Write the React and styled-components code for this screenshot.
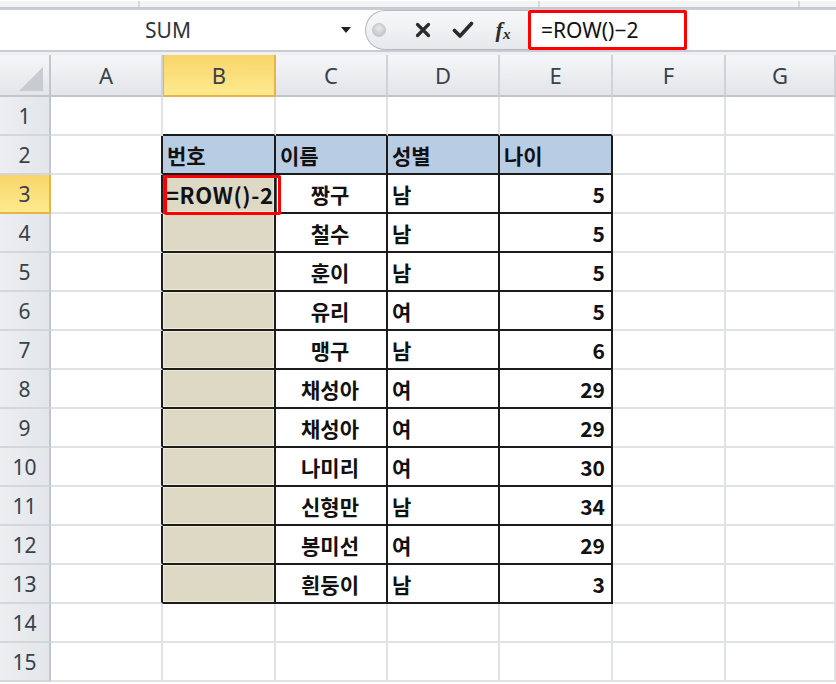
import React from "react";
import styled, { createGlobalStyle } from "styled-components";

const GlobalStyle = createGlobalStyle`
  html, body {
    margin: 0;
    padding: 0;
    background: #ffffff;
    overflow: hidden;
  }
  body {
    font-family: "Noto Sans", "Noto Sans CJK KR", sans-serif;
  }
`;

const COLS = ["A", "B", "C", "D", "E", "F", "G"];
const ROW_COUNT = 15;

const people = [
  { name: "짱구", gender: "남", age: 5 },
  { name: "철수", gender: "남", age: 5 },
  { name: "훈이", gender: "남", age: 5 },
  { name: "유리", gender: "여", age: 5 },
  { name: "맹구", gender: "남", age: 6 },
  { name: "채성아", gender: "여", age: 29 },
  { name: "채성아", gender: "여", age: 29 },
  { name: "나미리", gender: "여", age: 30 },
  { name: "신형만", gender: "남", age: 34 },
  { name: "봉미선", gender: "여", age: 29 },
  { name: "흰둥이", gender: "남", age: 3 },
];

// table lives in B2:E13 (col index 1..4, row 2..13)
const inTable = (c, r) => c >= 1 && c <= 4 && r >= 2 && r <= 13;

function cellContent(c, r) {
  if (r === 2) {
    return { text: ["번호", "이름", "성별", "나이"][c - 1], fill: "#b8cce4", align: "left" };
  }
  const p = people[r - 3];
  if (c === 1) return { text: "", fill: "#ddd9c4", align: "left", tan: true };
  if (c === 2) return { text: p.name, align: "center" };
  if (c === 3) return { text: p.gender, align: "left" };
  return { text: p.age, align: "right" };
}

export default function App() {
  const cells = [];
  for (let r = 1; r <= ROW_COUNT; r++) {
    cells.push(
      <RowHead key={"h" + r} $active={r === 3}>
        {r}
      </RowHead>
    );
    for (let c = 0; c < COLS.length; c++) {
      const table = inTable(c, r);
      const rightDark = table || inTable(c + 1, r);
      const bottomDark = table || inTable(c, r + 1);
      const content = table ? cellContent(c, r) : {};
      cells.push(
        <Cell
          key={r + "-" + c}
          $fill={content.fill}
          $align={content.align}
          $rightDark={rightDark}
          $bottomDark={bottomDark}
          $tan={content.tan}
        >
          {c === 1 && r === 3 ? (
            <>
              <EditText>=ROW()-2</EditText>
              <EditFrame />
              <RedMark />
            </>
          ) : (
            content.text
          )}
        </Cell>
      );
    }
  }

  return (
    <>
      <GlobalStyle />
      <Page>
        <TopStrip>
          <StripPart $w={140} />
          <StripPart $w={400} />
          <StripPart $w={260} />
        </TopStrip>
        <FormulaBar>
          <NameBox>
            <NameText>SUM</NameText>
            <ArrowArea>
              <DropArrow />
            </ArrowArea>
          </NameBox>
          <Pill>
            <DotArea>
              <Dot />
            </DotArea>
            <IconBtn $first>
              <svg width="18" height="18" viewBox="0 0 18 18">
                <path
                  d="M3.5 3.5 L14.5 14.5 M14.5 3.5 L3.5 14.5"
                  stroke="#2b2b2b"
                  strokeWidth="3.2"
                  strokeLinecap="round"
                  fill="none"
                />
              </svg>
            </IconBtn>
            <IconBtn>
              <svg width="22" height="20" viewBox="0 0 22 20">
                <path
                  d="M2.5 10.5 L8 16 L19.5 3.5"
                  stroke="#2b2b2b"
                  strokeWidth="3.6"
                  strokeLinecap="round"
                  strokeLinejoin="round"
                  fill="none"
                />
              </svg>
            </IconBtn>
            <IconBtn>
              <Fx>
                f<sub>x</sub>
              </Fx>
            </IconBtn>
          </Pill>
          <FormulaInput>
            <FormulaMark>=ROW()−2</FormulaMark>
          </FormulaInput>
        </FormulaBar>
        <Gap />
        <Sheet>
          <Corner>
            <CornerTri />
          </Corner>
          {COLS.map((col) => (
            <ColHead key={col} $active={col === "B"}>
              {col}
            </ColHead>
          ))}
          {cells}
        </Sheet>
      </Page>
    </>
  );
}

const Page = styled.div`
  width: 836px;
  height: 684px;
  overflow: hidden;
  background: #ffffff;
`;

const TopStrip = styled.div`
  display: flex;
  height: 6px;
  background: #f3f4f6;
  border-top: 1px solid #ffffff;
  border-bottom: 1px solid #c6cad0;
`;

const StripPart = styled.div`
  width: ${(p) => p.$w}px;
  border-right: 2px solid #d6d9de;
  box-sizing: border-box;
`;

const FormulaBar = styled.div`
  display: flex;
  height: 40px;
  border-top: 2px solid #c9cdd3;
  border-bottom: 2px solid #c9cdd3;
  background: #ffffff;
`;

const NameBox = styled.div`
  display: flex;
  align-items: center;
  width: 360px;
  background: #ffffff;
`;

const NameText = styled.div`
  flex: 1;
  text-align: center;
  font-family: "Noto Sans", sans-serif;
  font-size: 21px;
  color: #2f3338;
  padding-left: 4px;
`;

const ArrowArea = styled.div`
  width: 28px;
  display: flex;
  justify-content: center;
`;

const DropArrow = styled.div`
  width: 0;
  height: 0;
  border-left: 5px solid transparent;
  border-right: 5px solid transparent;
  border-top: 6px solid #222;
`;

const Pill = styled.div`
  display: flex;
  align-items: center;
  margin-left: 5px;
  width: 163px;
  box-sizing: border-box;
  border: 1px solid #b5bac1;
  border-right: none;
  border-radius: 20px 0 0 20px;
  background: linear-gradient(#f7f8f9, #e6e9ec);
`;

const DotArea = styled.div`
  width: 26px;
  display: flex;
  justify-content: center;
`;

const Dot = styled.div`
  width: 12px;
  height: 12px;
  border-radius: 50%;
  background: radial-gradient(circle at 50% 35%, #e9eaec, #b7bbc0);
  border: 1px solid #c3c7cc;
`;

const IconBtn = styled.div`
  width: 40px;
  height: 100%;
  display: flex;
  align-items: center;
  justify-content: center;
  margin-left: ${(p) => (p.$first ? "11px" : "0")};
`;

const Fx = styled.span`
  font-family: "Liberation Serif", serif;
  font-style: italic;
  font-weight: 700;
  font-size: 22px;
  color: #2b2b2b;
  sub {
    font-size: 15px;
    vertical-align: -2px;
  }
`;

const FormulaInput = styled.div`
  flex: 1;
  display: flex;
  background: #ffffff;
`;

const FormulaMark = styled.div`
  width: 159px;
  box-sizing: border-box;
  border: 3px solid #ff0000;
  border-radius: 2px;
  padding-left: 10px;
  display: flex;
  align-items: center;
  font-family: "Noto Sans", sans-serif;
  font-size: 21px;
  color: #111;
`;

const Gap = styled.div`
  height: 3px;
  background: #eef0f3;
`;

const Sheet = styled.div`
  display: grid;
  grid-template-columns: 51px 112px 113px 112px 112px 113px 113px 1fr;
  grid-template-rows: 42px;
  grid-auto-rows: 39px;
`;

const headBase = `
  box-sizing: border-box;
  display: flex;
  align-items: center;
  justify-content: center;
  font-family: "Noto Sans", sans-serif;
  color: #39414c;
`;

const Corner = styled.div`
  ${headBase};
  position: relative;
  background: linear-gradient(#f5f6f8, #e2e5e9);
  border-right: 2px solid #c2c6cc;
  border-bottom: 2px solid #c2c6cc;
`;

const CornerTri = styled.div`
  position: absolute;
  right: 6px;
  bottom: 4px;
  width: 0;
  height: 0;
  border-left: 24px solid transparent;
  border-bottom: 24px solid #c8cbcf;
`;

const ColHead = styled.div`
  ${headBase};
  font-size: 22px;
  background: ${(p) =>
    p.$active ? "linear-gradient(#f9d46a, #fdea8e)" : "linear-gradient(#f5f6f8, #e2e5e9)"};
  border-right: 2px solid ${(p) => (p.$active ? "#e8b445" : "#cfd3d8")};
  border-bottom: 2px solid ${(p) => (p.$active ? "#e8b445" : "#c2c6cc")};
  border-left: ${(p) => (p.$active ? "1px solid #e8b445" : "none")};
`;

const RowHead = styled.div`
  ${headBase};
  font-size: 21px;
  background: ${(p) =>
    p.$active ? "linear-gradient(#f9d46a, #fdea8e)" : "linear-gradient(90deg, #eceef1, #e3e6ea)"};
  border-right: 2px solid ${(p) => (p.$active ? "#e8b445" : "#c2c6cc")};
  border-bottom: 2px solid ${(p) => (p.$active ? "#e8b445" : "#d3d6db")};
`;

const Cell = styled.div`
  box-sizing: border-box;
  position: relative;
  display: flex;
  align-items: center;
  justify-content: ${(p) =>
    p.$align === "center" ? "center" : p.$align === "right" ? "flex-end" : "flex-start"};
  padding: 0 6px 0 4px;
  background: ${(p) => p.$fill || "#ffffff"};
  border-right: 2px solid ${(p) => (p.$rightDark ? "#1c1c1c" : "#e1e2e3")};
  border-bottom: 2px solid ${(p) => (p.$bottomDark ? "#1c1c1c" : "#e1e2e3")};
  box-shadow: ${(p) => (p.$tan ? "inset 0 0 0 1px #efebd9" : "none")};
  font-family: "Noto Sans CJK KR", "Noto Sans", sans-serif;
  font-weight: 700;
  font-size: 21px;
  color: #111111;
  white-space: nowrap;
`;

const EditText = styled.span`
  position: relative;
  z-index: 3;
  margin-left: -1px;
  font-family: "Noto Sans CJK KR", sans-serif;
  font-weight: 700;
  font-size: 22px;
  letter-spacing: 0.6px;
`;

const EditFrame = styled.div`
  position: absolute;
  left: 0;
  top: 0;
  right: -3px;
  bottom: -2px;
  border: 1px solid #555;
  z-index: 2;
`;

const RedMark = styled.div`
  position: absolute;
  left: 1px;
  top: 0;
  width: 117px;
  height: 40px;
  box-sizing: border-box;
  border: 3px solid #ff0000;
  border-radius: 2px;
  z-index: 4;
`;
